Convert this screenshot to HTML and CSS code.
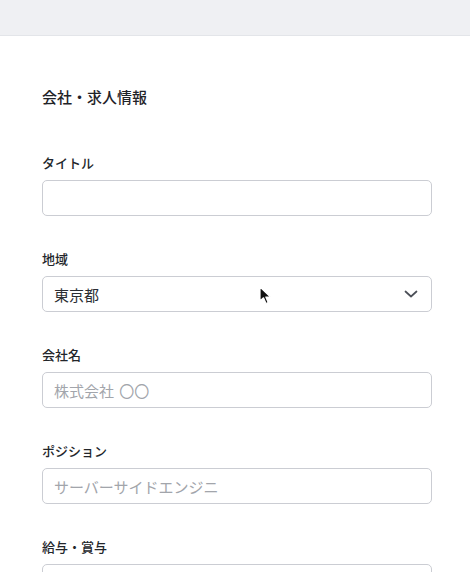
FILE: index.html
```html
<!DOCTYPE html>
<html lang="ja">
<head>
<meta charset="utf-8">
<link rel="stylesheet" href="styles.css">
</head>
<body>
<header class="topbar"></header>
<main class="content">
  <h2 class="heading">会社・求人情報</h2>
  <div class="field">
    <label class="label">タイトル</label>
    <div class="input"></div>
  </div>
  <div class="field">
    <label class="label">地域</label>
    <div class="input select">
      <span class="value">東京都</span>
      <svg class="chev" width="14" height="8" viewBox="0 0 14 8"><path d="M1.5 1.5 L7 6.5 L12.5 1.5" fill="none" stroke="#4b4f57" stroke-width="1.7" stroke-linecap="round" stroke-linejoin="round"/></svg>
    </div>
  </div>
  <div class="field">
    <label class="label">会社名</label>
    <div class="input"><span class="ph">株式会社 〇〇</span></div>
  </div>
  <div class="field">
    <label class="label">ポジション</label>
    <div class="input"><span class="ph">サーバーサイドエンジニ</span></div>
  </div>
  <div class="field">
    <label class="label">給与・賞与</label>
    <div class="input"></div>
  </div>
</main>
<svg class="cursor" width="14" height="20" viewBox="0 0 14 20"><path d="M1 1 L1 15 L4.5 11.8 L7 17.5 L9.2 16.5 L6.8 11 L11.5 11 Z" fill="#111" stroke="#fff" stroke-width="1.2" stroke-linejoin="round"/></svg>
</body>
</html>
```
FILE: styles.css
```css
html, body {
  margin: 0;
  padding: 0;
  background: #ffffff;
  font-family: "Noto Sans CJK JP", "Noto Sans", sans-serif;
  color: #1f2328;
  overflow: hidden;
}
.topbar {
  height: 35px;
  background: #eff0f3;
  border-bottom: 1px solid #e3e5e9;
}
.content {
  padding: 0 38px 0 42px;
}
.heading {
  margin: 50px 0 0 0;
  font-size: 15px;
  line-height: 22px;
  font-weight: 500;
  color: #1f2328;
}
.field {
  display: flex;
  flex-direction: column;
  gap: 7px;
  margin-bottom: 33px;
}
.heading + .field {
  margin-top: 45px;
}
.label {
  font-size: 13px;
  line-height: 20px;
  font-weight: 500;
  color: #23262b;
}
.input {
  box-sizing: border-box;
  height: 36px;
  border: 1px solid #cbcdd3;
  border-radius: 5px;
  background: #fff;
  display: flex;
  align-items: center;
  padding: 0 11px;
  font-size: 15px;
}
.select {
  justify-content: space-between;
  padding-right: 13px;
}
.value {
  color: #2b2e33;
}
.ph {
  color: #a2a5ab;
  word-spacing: 2px;
}
.cursor {
  position: absolute;
  left: 259px;
  top: 286px;
}
```
